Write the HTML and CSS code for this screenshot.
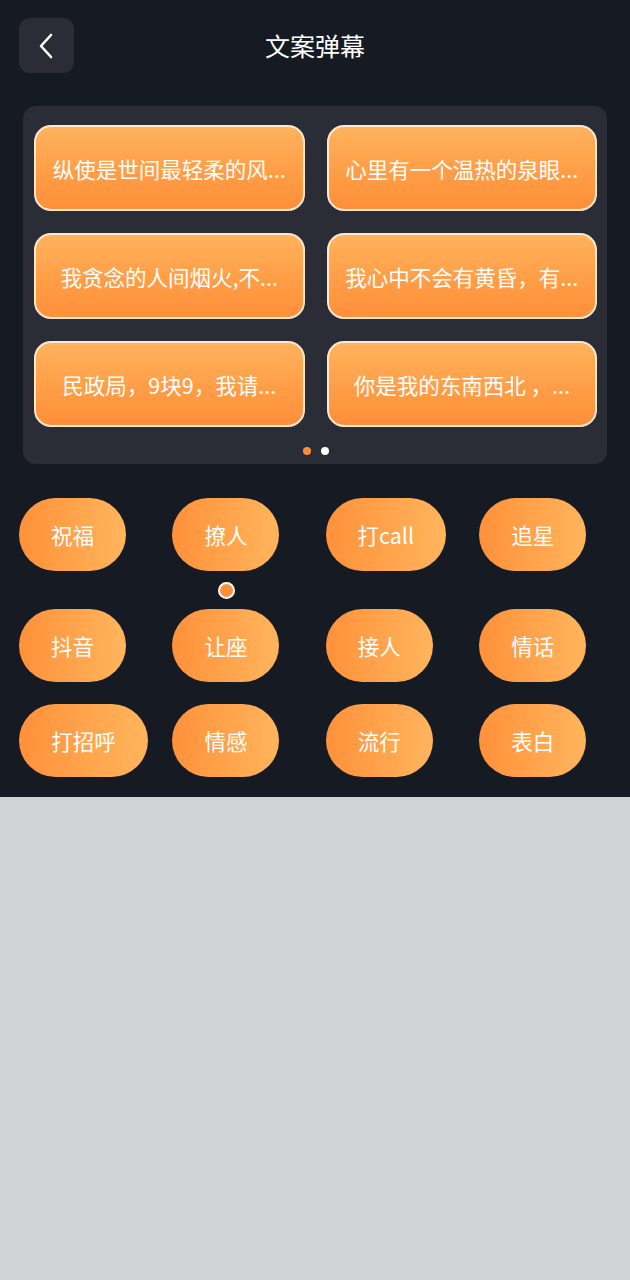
FILE: index.html
```html
<!DOCTYPE html>
<html lang="zh-CN">
<head>
<meta charset="utf-8">
<title>文案弹幕</title>
<link rel="stylesheet" href="styles.css">
</head>
<body>
<div class="app">
  <header class="header">
    <button class="back" aria-label="返回">
      <svg width="55" height="55" viewBox="0 0 55 55"><path d="M32 17 L22 28 L32 39" fill="none" stroke="#fff" stroke-width="2.6" stroke-linecap="round" stroke-linejoin="round"/></svg>
    </button>
    <h1 class="title">文案弹幕</h1>
    <span></span>
  </header>

  <section class="panel">
    <div class="cards">
      <div class="card">纵使是世间最轻柔的风...</div>
      <div class="card">心里有一个温热的泉眼...</div>
      <div class="card">我贪念的人间烟火,不...</div>
      <div class="card">我心中不会有黄昏，有...</div>
      <div class="card">民政局，9块9，我请...</div>
      <div class="card">你是我的东南西北 ，...</div>
    </div>
    <div class="dots"><span class="dot dot--active"></span><span class="dot"></span></div>
  </section>

  <section class="tags">
    <div class="tag-row tag-row--first">
      <div class="tag">祝福</div>
      <div class="tag tag--selected">撩人<span class="marker"></span></div>
      <div class="tag tag--wide">打call</div>
      <div class="tag">追星</div>
    </div>
    <div class="tag-row">
      <div class="tag">抖音</div>
      <div class="tag">让座</div>
      <div class="tag">接人</div>
      <div class="tag">情话</div>
    </div>
    <div class="tag-row">
      <div class="tag tag--xwide">打招呼</div>
      <div class="tag">情感</div>
      <div class="tag">流行</div>
      <div class="tag">表白</div>
    </div>
  </section>
</div>
</body>
</html>
```

FILE: styles.css
```css
* { box-sizing: border-box; }
html, body {
  margin: 0;
  padding: 0;
}
body {
  background: #d1d2d4;
  font-family: "Noto Sans CJK SC", "Noto Sans", sans-serif;
  width: 630px;
  height: 1280px;
}
.app {
  background: #161a23;
  padding-bottom: 20px;
}
.header {
  display: grid;
  grid-template-columns: 55px 1fr 55px;
  align-items: center;
  padding: 18px 19px 0;
  height: 73px;
}
.back {
  width: 55px;
  height: 55px;
  border: 0;
  padding: 0;
  border-radius: 11px;
  background: #2a2d35;
  display: flex;
  align-items: center;
  justify-content: center;
}
.back svg { display: block; }
.title {
  margin: 0;
  text-align: center;
  color: #ffffff;
  font-size: 25px;
  font-weight: 400;
  line-height: 55px;
}
.panel {
  margin: 33px 23px 0;
  background: #2a2d36;
  border-radius: 13px;
  padding: 19px 10px 9px 11px;
}
.cards {
  display: grid;
  grid-template-columns: 1fr 1fr;
  column-gap: 22px;
  row-gap: 22px;
}
.card {
  height: 86px;
  border: 2px solid #fde8d0;
  border-radius: 17px;
  background: linear-gradient(180deg, #ffb25d 0%, #ff9c45 60%, #ff8f3a 100%);
  color: #ffffff;
  font-size: 21.5px;
  display: flex;
  align-items: center;
  justify-content: center;
  white-space: nowrap;
  overflow: hidden;
  padding: 0 12px;
}
.dots {
  display: flex;
  justify-content: center;
  gap: 10px;
  margin-top: 20px;
  height: 8px;
}
.dot {
  width: 8px;
  height: 8px;
  border-radius: 50%;
  background: #ffffff;
}
.dot--active { background: #ff8d3a; }
.tags {
  margin-top: 34px;
  padding-left: 19px;
}
.tag-row {
  display: grid;
  grid-template-columns: repeat(4, 153.4px);
  justify-items: start;
  margin-bottom: 22px;
}
.tag-row:last-child { margin-bottom: 0; }
.tag-row--first { margin-bottom: 38px; }
.tag {
  position: relative;
  width: 107px;
  height: 73px;
  border-radius: 37px;
  background: linear-gradient(90deg, #ff913a 0%, #ffb55d 100%);
  color: #ffffff;
  font-size: 21.5px;
  display: flex;
  align-items: center;
  justify-content: center;
}
.tag--wide { width: 120px; }
.tag--xwide { width: 129px; }
.marker {
  position: absolute;
  top: calc(100% + 11px);
  left: 50%;
  width: 17px;
  height: 17px;
  margin-left: -8px;
  border-radius: 50%;
  background: #ff8f3a;
  border: 2px solid #ffffff;
}
```
